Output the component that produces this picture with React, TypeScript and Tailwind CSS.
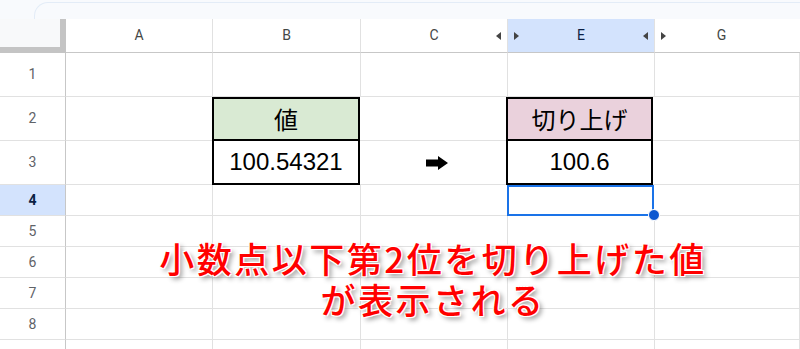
import React from "react";

const cols = ["w-[66px]", "w-[147px]", "w-[148px]", "w-[147px]", "w-[147px]", "flex-1"];
const rowHeights = ["h-[44px]", "h-[44px]", "h-[44px]", "h-[31px]", "h-[31px]", "h-[31px]", "h-[31px]", "h-[31px]", "h-[31px]"];

const Tri = ({ dir }: { dir: "l" | "r" }) => (
  <svg width="5" height="8" viewBox="0 0 5 8" className="shrink-0">
    {dir === "l" ? <polygon points="5,0 5,8 0,4" fill="#444" /> : <polygon points="0,0 0,8 5,4" fill="#444" />}
  </svg>
);

const Arrow = () => (
  <svg width="23" height="14" viewBox="0 0 23 14">
    <polygon points="0,3.5 12,3.5 12,0 22,7 12,14 12,10.5 0,10.5" fill="#000" />
  </svg>
);

export default function App() {
  const body = (r: number, c: number) => {
    const base = "border-r border-b border-[#e1e1e1] flex items-center justify-center shrink-0";
    const w = cols[c];
    if (c === 0) {
      const sel = r === 4;
      return (
        <div
          key={c}
          className={`${w} ${base} border-r-[#c7c7c7] ${sel ? "bg-[#d3e3fd] text-[#0b1f44] font-bold" : "bg-white text-[#5f6368]"} text-[14px]`}
          style={{ fontFamily: "Roboto, Arial, sans-serif" }}
        >
          {r < 9 ? r : ""}
        </div>
      );
    }
    if (c === 2 && r === 2)
      return (
        <div key={c} className={`${w} shrink-0 border-2 border-black -ml-px bg-[#d9ead3] flex items-center justify-center text-[24px] text-black`} style={{ fontFamily: '"Noto Sans CJK JP", sans-serif' }}>
          値
        </div>
      );
    if (c === 2 && r === 3)
      return (
        <div key={c} className={`${w} shrink-0 border-2 border-t-0 border-black -ml-px bg-white flex items-center justify-center text-[24px] text-black`} style={{ fontFamily: '"Liberation Sans", Arial, sans-serif' }}>
          100.54321
        </div>
      );
    if (c === 4 && r === 2)
      return (
        <div key={c} className={`${w} shrink-0 border-2 border-black -ml-px bg-[#ead1dc] flex items-center justify-center text-[24px] text-black`} style={{ fontFamily: '"Noto Sans CJK JP", sans-serif' }}>
          切り上げ
        </div>
      );
    if (c === 4 && r === 3)
      return (
        <div key={c} className={`${w} shrink-0 border-2 border-t-0 border-black -ml-px bg-white flex items-center justify-center text-[24px] text-black`} style={{ fontFamily: '"Liberation Sans", Arial, sans-serif' }}>
          100.6
        </div>
      );
    if (c === 4 && r === 4)
      return (
        <div key={c} className={`${w} shrink-0 border-2 border-[#1a73e8] -ml-px bg-white relative`}>
          <div className="absolute -right-[8px] -bottom-[7px] w-[12px] h-[12px] rounded-full bg-[#0b57d0] border border-white" />
        </div>
      );
    if (c === 3 && r === 3)
      return (
        <div key={c} className={`${w} ${base} pl-[8px]`}>
          <Arrow />
        </div>
      );
    return <div key={c} className={`${w} ${base} bg-white`} />;
  };

  const letters = ["", "A", "B", "C", "E", "G"];

  return (
    <div className="w-[800px] h-[349px] overflow-hidden bg-white relative" style={{ fontFamily: "Roboto, Arial, sans-serif" }}>
      {/* toolbar strip */}
      <div className="h-[19px] bg-[#f8fafd] relative">
        <div className="absolute left-[34px] top-[2px] right-0 h-[17px] border-t border-l border-[#e3ecf7] rounded-tl-[14px]" />
      </div>

      {/* column headers */}
      <div className="flex h-[34px]">
        <div className="w-[66px] shrink-0 bg-[#f8f9fa] border-r-[6px] border-b-[6px] border-[#c4c4c4]" />
        {letters.slice(1).map((l, i) => {
          const c = i + 1;
          const sel = l === "E";
          return (
            <div
              key={l}
              className={`${cols[c]} shrink-0 border-b border-[#c7c7c7] ${c < 5 ? "border-r border-r-[#e1e1e1]" : ""} ${sel ? "bg-[#d3e3fd] text-[#0b1f44]" : "bg-white text-[#444746]"} text-[14px] flex items-center px-[6px]`}
            >
              <div className="w-[5px]">{(l === "E" || l === "G") && <Tri dir="r" />}</div>
              <div className={`flex-1 text-center ${l === "G" ? "pr-[12px]" : ""}`}>{l}</div>
              <div className="w-[5px]">{(l === "C" || l === "E") && <Tri dir="l" />}</div>
            </div>
          );
        })}
      </div>

      {/* rows */}
      {rowHeights.map((h, i) => (
        <div key={i} className={`flex ${h}`}>
          {cols.map((_, c) => body(i + 1, c))}
        </div>
      ))}

      {/* annotation */}
      <div
        className="absolute left-[83px] top-[237px] w-[700px] text-center text-[35px] leading-[41px] tracking-[2.5px] text-[#ff0000] font-medium [text-shadow:1px_1px_0_#fff,-1px_-1px_0_#fff,1px_-1px_0_#fff,-1px_1px_0_#fff,0_0_2px_#fff,3px_3px_5px_rgba(0,0,0,0.45)]"
        style={{ fontFamily: '"Noto Sans CJK JP", sans-serif' }}
      >
        小数点以下第2位を切り上げた値
        <br />
        が表示される
      </div>
    </div>
  );
}
